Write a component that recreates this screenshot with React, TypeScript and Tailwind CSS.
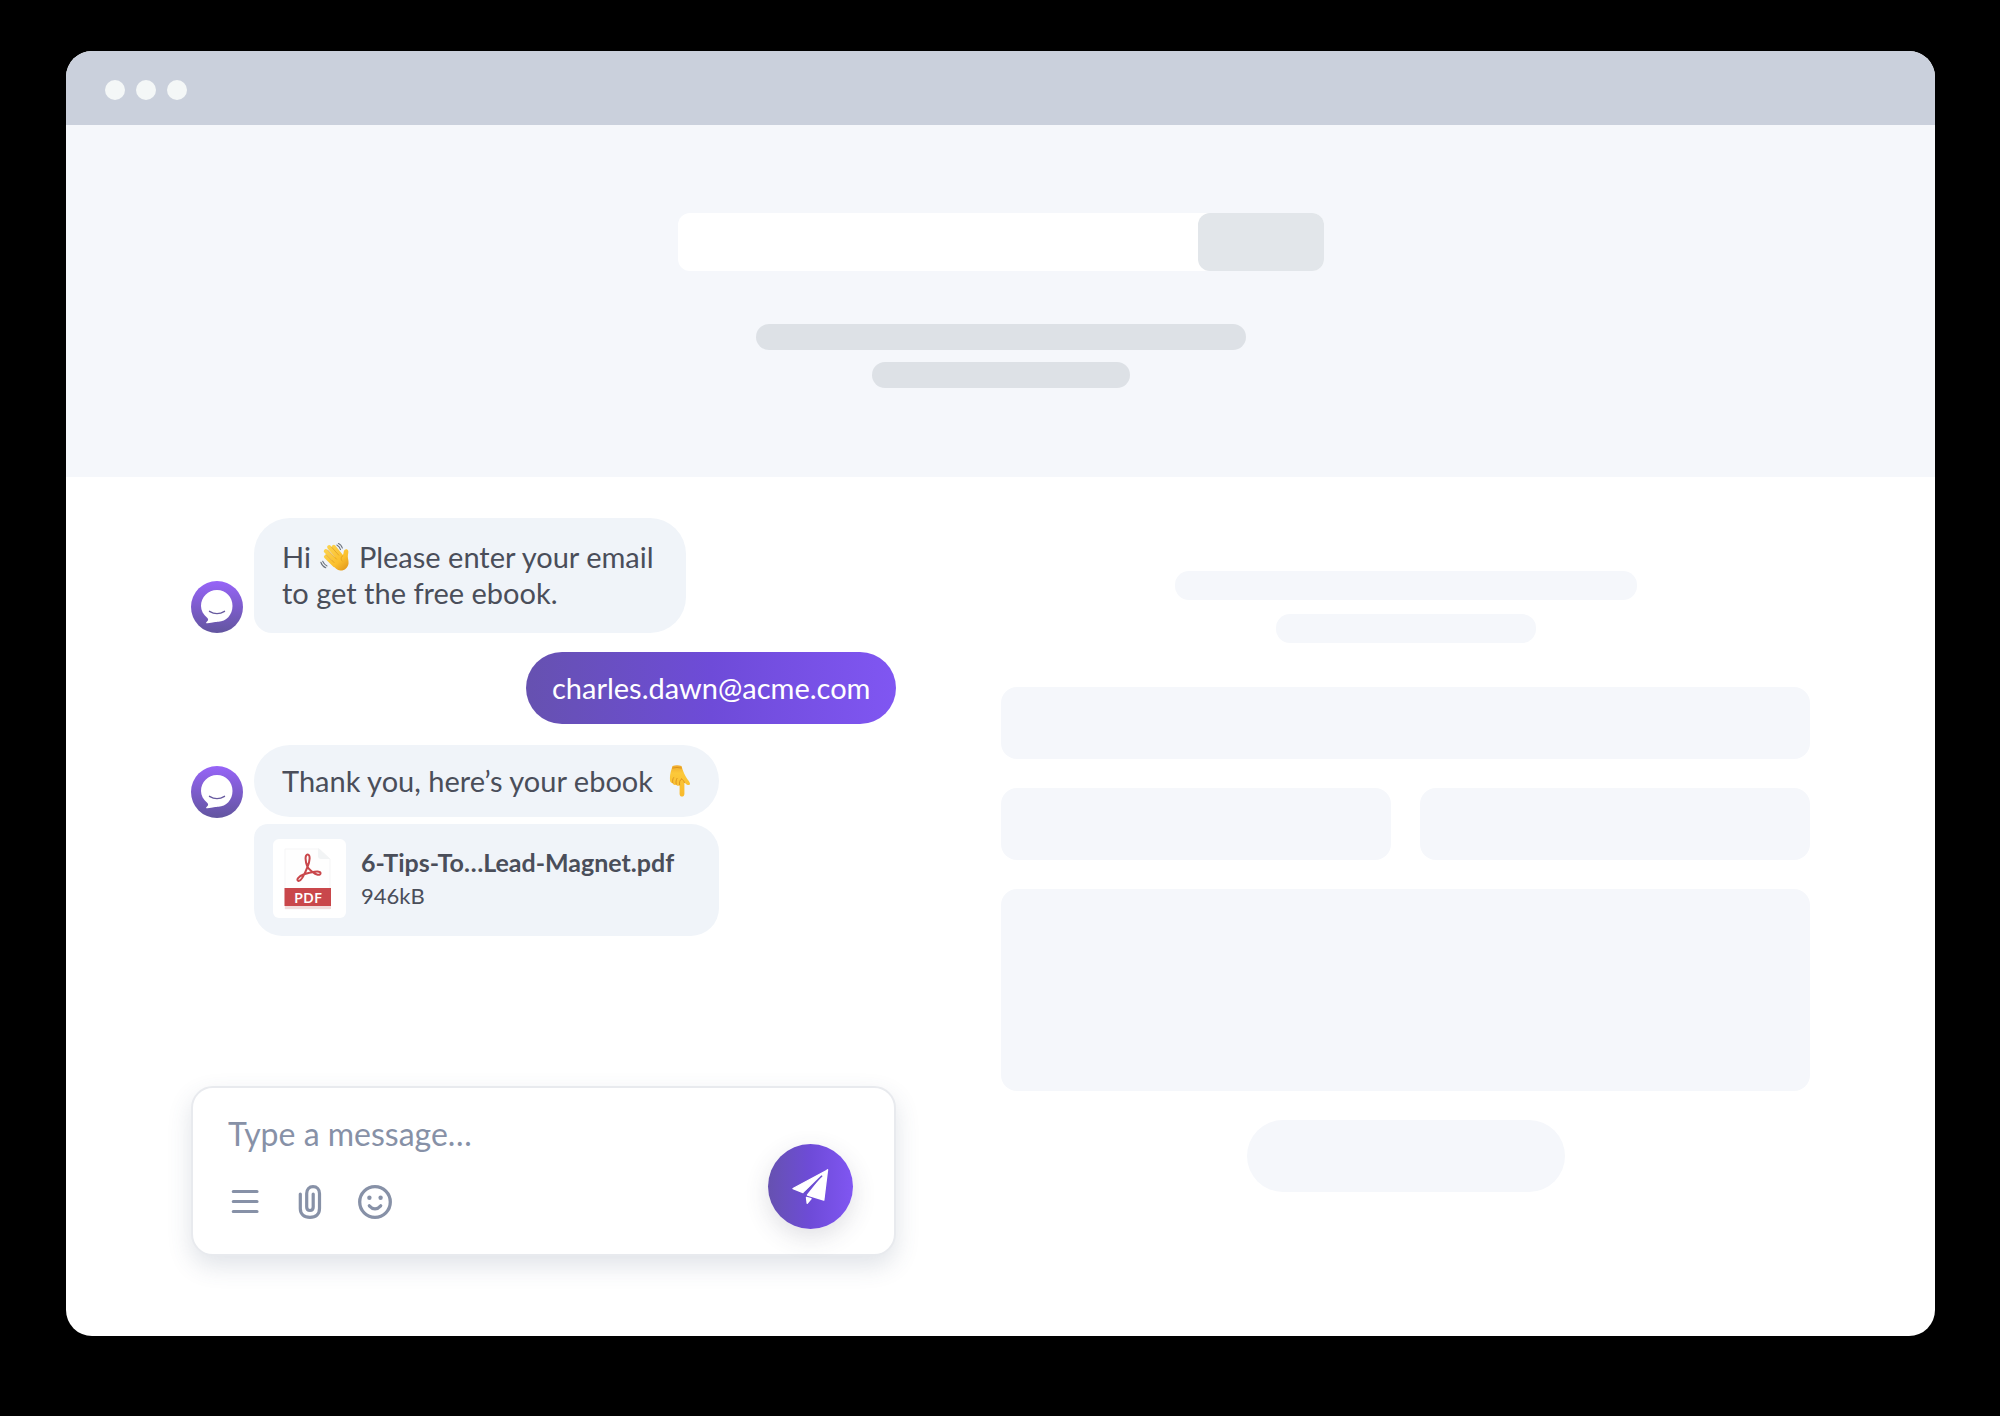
import React from "react";

function WavingHand() {
  return (
    <svg viewBox="20 28 104 98" role="img" aria-label="waving hand" className="mx-2 inline-block h-8 w-8 align-[-5px]">
      <defs>
        <linearGradient id="wave-skin" gradientUnits="userSpaceOnUse" x1="40" y1="45" x2="105" y2="120">
          <stop offset="0" stopColor="#fbd34f" />
          <stop offset="0.65" stopColor="#fbc02d" />
          <stop offset="1" stopColor="#e39a1c" />
        </linearGradient>
      </defs>
      <g stroke="url(#wave-skin)" strokeLinecap="round" strokeLinejoin="round" fill="none">
        <path d="M68 44 L94 76" strokeWidth="13" />
        <path d="M53 45 L84 82" strokeWidth="13" />
        <path d="M42 58 L76 92" strokeWidth="13" />
        <path d="M42 76 L70 104" strokeWidth="12" />
      </g>
      <path
        d="M90 74 C97 75 99 69 100 62 C101 54 106 50 111 52 C117 55 116 62 114 70 C112 79 117 88 116 98 C114 112 103 122 89 121 C79 120 72 112 64 103 L58 92 L80 68 Z"
        fill="url(#wave-skin)"
      />
      <g stroke="#dc951b" strokeWidth="2.2" strokeLinecap="round" fill="none">
        <path d="M61 45 L84 71" />
        <path d="M48 54 L77 84" />
        <path d="M43 69 L69 95" />
        <path d="M97 73 C91 77 90 85 95 90" />
      </g>
      <g stroke="#6b727d" strokeWidth="3.4" strokeLinecap="round" fill="none">
        <path d="M83 33 Q92 36 96 48" />
        <path d="M78 38 Q87 42 90 53" />
        <path d="M26 94 Q30 107 42 112" />
        <path d="M32 91 Q36 101 46 106" />
      </g>
    </svg>
  );
}

function PointingDown() {
  return (
    <svg viewBox="0 0 22 32" role="img" aria-label="pointing down" className="ml-4 inline-block h-8 w-[22px] align-[-5px]">
      <defs>
        <linearGradient id="point-skin" x1="0" y1="0" x2="0" y2="1">
          <stop offset="0" stopColor="#f0a92b" />
          <stop offset="0.25" stopColor="#fcc93a" />
          <stop offset="1" stopColor="#f8b92c" />
        </linearGradient>
      </defs>
      <path
        d="M3.5 1 Q8 -0.6 12.5 1 C13.6 4.5 14.5 8 17 12 C18.6 14.8 20.6 16.6 21 18.6 C21.2 20.2 19.2 20.6 17.6 19.4 L15.4 17.6 V29 C15.4 32.4 10.6 32.4 10.6 29 V20 C9.6 21.4 7.6 21 7.2 19.6 C5.6 20.6 4 19.6 3.8 18 C1.8 18.2 1 16.6 1 14.8 C0.6 9.6 2 6 3.5 1 Z"
        fill="url(#point-skin)"
      />
      <g stroke="#d98f1c" strokeWidth="0.9" strokeLinecap="round" fill="none">
        <path d="M3.8 18 C3.4 16 3.6 14 4.6 12.6" />
        <path d="M7.2 19.4 C6.8 17 7 15 8 13.4" />
        <path d="M10.6 20 C10.2 17 10.8 15 12.4 14 M12.4 14 C14 14.6 15 16 15.4 17.6" />
        <path d="M3.6 3 Q8 1.8 12.4 3" />
      </g>
    </svg>
  );
}

function Avatar({ id }: { id: string }) {
  return (
    <svg viewBox="0 0 52 52" role="img" aria-label="Chat assistant" className="size-[52px] shrink-0">
      <defs>
        <linearGradient id={id} x1="0" y1="0" x2="0" y2="1">
          <stop offset="0" stopColor="#9764f8" />
          <stop offset="1" stopColor="#62559f" />
        </linearGradient>
      </defs>
      <circle cx="26" cy="26" r="26" fill={`url(#${id})`} />
      <path
        d="M26 9 C35 9 41.500 16.200 41.500 25 C41.500 34 35 40.500 27.500 40.700 C24.500 40.800 22 41.600 16.500 42.300 C14.800 42.500 14.800 41.500 15.800 40.700 C17.300 39.500 17.600 38.400 16.400 37 C12.300 33.600 10 29.500 10 25 C10 16.200 17 9 26 9 Z"
        fill="#fff"
      />
      <path d="M18.500 30.300 Q26 35 33.500 30.300" fill="none" stroke="#675a9f" strokeWidth="1.400" strokeLinecap="round" />
    </svg>
  );
}

function PdfIcon() {
  return (
    <svg viewBox="0 0 73 79" role="img" aria-label="PDF document" className="h-[79px] w-[73px] shrink-0">
      <rect width="73" height="79" rx="6" fill="#fff" />
      <path d="M12 10 H46 L57 20 V70 H12 Z" fill="#fefefe" stroke="#f5f5f6" strokeWidth="1" />
      <path d="M45 9 L57 20 H48 Q45 20 45 17 Z" fill="#f2f4f5" />
      <rect x="12" y="66" width="46" height="4" fill="#f1dcdc" />
      <rect x="11.500" y="49" width="46.500" height="18" fill="#c9474b" />
      <text x="35" y="64" textAnchor="middle" fontFamily="Open Sans, sans-serif" fontWeight="600" fontSize="15" fill="#fff">
        PDF
      </text>
      <path
        d="M34.500 28 C32 22 31.800 15.600 34.600 15.600 C37.600 15.600 37 22 34.500 28 C31.500 35.500 28 42.300 25.600 42 C22.600 41.400 25.500 37 31 35.200 C37 33.200 47.500 31 47.600 34 C47.500 37.200 42.500 35.600 39.600 33 C37 30.800 35.600 30 34.500 28 Z"
        fill="none"
        stroke="#c9474b"
        strokeWidth="2"
        strokeLinejoin="round"
      />
    </svg>
  );
}

function MenuIcon() {
  return (
    <svg viewBox="0 0 34 34" className="size-[34px]" aria-hidden="true">
      <path d="M5.300 6.500 H29 M5.300 16.500 H29 M5.300 26.500 H29" stroke="currentColor" strokeWidth="3.200" strokeLinecap="round" />
    </svg>
  );
}

function ClipIcon() {
  return (
    <svg viewBox="0 0 34 34" className="size-[34px]" aria-hidden="true" fill="none" stroke="currentColor" strokeWidth="3.200" strokeLinecap="round">
      <path d="M7.300 9 V23.500 C7.300 29 11 32.300 17 32.300 C23 32.300 26.500 29 26.500 23.500 V8.500 C26.500 4.300 24 1.700 20 1.700 C16.200 1.700 13.700 4.300 13.700 8.500 V22 C13.700 24.200 14.900 25.500 17 25.500 C19 25.500 20.200 24.200 20.200 22 V9" />
    </svg>
  );
}

function SmileIcon() {
  return (
    <svg viewBox="0 0 34 34" className="size-[34px]" aria-hidden="true">
      <circle cx="17" cy="17" r="15.300" fill="none" stroke="currentColor" strokeWidth="3.300" />
      <circle cx="11.400" cy="12.700" r="2.200" fill="currentColor" />
      <circle cx="22.600" cy="12.700" r="2.200" fill="currentColor" />
      <path d="M11.300 20.800 Q17 27 22.700 20.800" fill="none" stroke="currentColor" strokeWidth="3.200" strokeLinecap="round" />
    </svg>
  );
}

function PlaneIcon() {
  return (
    <svg viewBox="0 0 37 36" className="h-9 w-[37px]" aria-hidden="true" fill="#fff" stroke="#fff" strokeLinejoin="round">
      <path d="M35.500 1 L1 19.500 L11 23.500 Z" strokeWidth="1.400" />
      <path d="M35.500 1 L15.500 26 L31.800 31 Z" strokeWidth="1.400" />
      <path d="M14.500 28.500 L19 29.700 L15.200 34.200 Z" strokeWidth="1.400" />
      <path d="M30 6.800 L12.200 24.200" stroke="#6b4fd0" strokeWidth="1.600" />
    </svg>
  );
}

const toolButton = "flex size-[34px] items-center justify-center";

export default function App() {
  return (
    <div className="flex min-h-screen flex-col bg-black pt-[51px] pr-[65px] pb-20 pl-[66px] font-['Lato',sans-serif] text-[#4a4e5a]">
      <div className="flex flex-1 flex-col overflow-hidden rounded-[26px] bg-white">
        <header className="flex h-[74px] items-center gap-[11px] bg-[#cad0dc] px-[39px] pt-1">
          <span className="size-5 rounded-full bg-[#f4f7f7]" />
          <span className="size-5 rounded-full bg-[#f4f7f7]" />
          <span className="size-5 rounded-full bg-[#f4f7f7]" />
        </header>

        <section className="flex flex-col items-center bg-[#f5f7fb] pt-[88px] pb-[89px]">
          <div className="flex h-[58px] w-[646px] justify-end rounded-xl bg-white">
            <div className="w-[126px] rounded-xl bg-[#e2e6ea]" />
          </div>
          <div className="mt-[53px] h-[26px] w-[490px] rounded-[13px] bg-[#dde1e6]" />
          <div className="mt-3 h-[26px] w-[258px] rounded-[13px] bg-[#dde1e6]" />
        </section>

        <main className="grid flex-1 grid-cols-[705fr_808fr] gap-[105px] px-[125px]">
          <section className="flex flex-col pt-[41px] pb-20" aria-label="Chat">
            <div className="flex items-end gap-[11px]">
              <Avatar id="avatar-first" />
              <p className="rounded-[36px] rounded-bl-[18px] bg-[#f0f4f9] pt-[21px] pr-8 pb-[22px] pl-7 text-[29px] leading-9">
                Hi
                <WavingHand />
                Please enter your email
                <br />
                to get the free ebook.
              </p>
            </div>

            <p className="mt-[19px] self-end rounded-full bg-linear-to-r from-[#6651b0] via-[#6e4bd8] to-[#8056f2] px-[26px] py-[18px] text-[29px] leading-9 text-white">
              charles.dawn@acme.com
            </p>

            <div className="mt-[21px] flex items-start gap-[11px]">
              <div className="pt-[21px]">
                <Avatar id="avatar-second" />
              </div>
              <div className="flex flex-col gap-[7px]">
                <p className="rounded-[36px] bg-[#f0f4f9] px-7 py-[18px] text-[29px] leading-9">
                  Thank you, here’s your ebook
                  <PointingDown />
                </p>
                <div className="flex items-start gap-[15px] rounded-[28px] rounded-tl-[14px] bg-[#f0f4f9] pt-[15px] pb-[18px] pl-[19px]">
                  <PdfIcon />
                  <div className="pt-[5px]">
                    <p className="text-[25px] leading-9 font-bold">6-Tips-To…Lead-Magnet.pdf</p>
                    <p className="text-[22px] leading-8">946kB</p>
                  </div>
                </div>
              </div>
            </div>

            <form
              className="mt-auto flex h-[170px] items-end justify-between rounded-[22px] border-2 border-[#e8eaee] bg-white pr-[41px] pb-[25px] pl-[35px] shadow-[0_10px_24px_rgba(60,80,110,0.16)]"
              onSubmit={(event: React.FormEvent) => event.preventDefault()}
            >
              <div className="flex min-w-0 flex-1 flex-col gap-[31px] pb-[10px]">
                <input
                  type="text"
                  aria-label="Message"
                  placeholder="Type a message…"
                  className="h-10 w-full bg-transparent text-[32px] text-[#4a4e5a] outline-none placeholder:text-[#8791a7]"
                />
                <div className="flex gap-[31px] text-[#8791a7]">
                  <button type="button" aria-label="Menu" className={toolButton}>
                    <MenuIcon />
                  </button>
                  <button type="button" aria-label="Attach file" className={toolButton}>
                    <ClipIcon />
                  </button>
                  <button type="button" aria-label="Insert emoji" className={toolButton}>
                    <SmileIcon />
                  </button>
                </div>
              </div>
              <button
                type="submit"
                aria-label="Send"
                className="flex size-[85px] items-center justify-center rounded-full bg-linear-to-r from-[#6651b0] via-[#6e4bd8] to-[#8056f2] shadow-[0_8px_24px_rgba(60,60,90,0.16)]"
              >
                <PlaneIcon />
              </button>
            </form>
          </section>

          <section className="flex flex-col items-center pt-[94px]" aria-label="Content placeholder">
            <div className="h-[29px] w-[462px] rounded-[14px] bg-[#f5f7fb]" />
            <div className="mt-[14px] h-[29px] w-[260px] rounded-[14px] bg-[#f5f7fb]" />
            <div className="mt-11 h-[72px] w-full rounded-2xl bg-[#f5f7fb]" />
            <div className="mt-[29px] grid w-full grid-cols-2 gap-[29px]">
              <div className="h-[72px] rounded-2xl bg-[#f5f7fb]" />
              <div className="h-[72px] rounded-2xl bg-[#f5f7fb]" />
            </div>
            <div className="mt-[29px] h-[202px] w-full rounded-2xl bg-[#f5f7fb]" />
            <div className="mt-[29px] h-[72px] w-[318px] rounded-full bg-[#f5f7fb]" />
          </section>
        </main>
      </div>
    </div>
  );
}
